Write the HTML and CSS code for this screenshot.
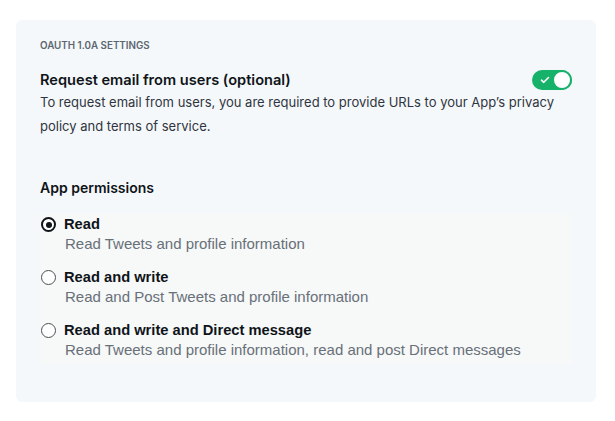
FILE: index.html
```html
<!DOCTYPE html>
<html>
<head>
<meta charset="utf-8">
<link rel="stylesheet" href="styles.css">
</head>
<body>
<div class="card">
  <div class="eyebrow">OAUTH 1.0A SETTINGS</div>
  <div class="setting">
    <div class="setting-head">
      <div class="setting-title">Request email from users (optional)</div>
      <div class="toggle">
        <svg class="toggle-check" width="10" height="8" viewBox="0 0 10 8"><path d="M1.5 4.2 L3.8 6.3 L8.5 1.5" fill="none" stroke="#fff" stroke-width="1.6" stroke-linecap="round" stroke-linejoin="round"/></svg>
        <span class="toggle-knob"></span>
      </div>
    </div>
    <p class="setting-desc">To request email from users, you are required to provide URLs to your App’s privacy policy and terms of service.</p>
  </div>
  <div class="section-title">App permissions</div>
  <div class="options">
    <div class="option">
      <span class="radio checked"></span>
      <div class="option-text">
        <div class="option-label">Read</div>
        <div class="option-desc">Read Tweets and profile information</div>
      </div>
    </div>
    <div class="option">
      <span class="radio"></span>
      <div class="option-text">
        <div class="option-label">Read and write</div>
        <div class="option-desc">Read and Post Tweets and profile information</div>
      </div>
    </div>
    <div class="option">
      <span class="radio"></span>
      <div class="option-text">
        <div class="option-label">Read and write and Direct message</div>
        <div class="option-desc">Read Tweets and profile information, read and post Direct messages</div>
      </div>
    </div>
  </div>
</div>
</body>
</html>
```
FILE: styles.css
```css
html, body { margin: 0; padding: 0; background: #fff; }
body { padding: 20px 19px 0 16px; font-family: Inter, "Noto Sans", sans-serif; color: #0f1419; }
.card {
  background: #f5f8fa;
  border-radius: 6px;
  padding: 19px 24px 0 24px;
  height: 382px;
  box-sizing: border-box;
}
.eyebrow { font-size: 9.8px; font-weight: 600; color: #5b6670; line-height: 12px; margin-top: 1px; }
.setting { margin-top: 18px; }
.setting-head { display: flex; justify-content: space-between; align-items: center; height: 20px; }
.setting-title { font-size: 14.6px; font-weight: 600; line-height: 20px; }
.toggle {
  width: 40px; height: 20px; border-radius: 10px; background: #17b26a;
  position: relative; display: flex; align-items: center; box-sizing: border-box; padding-left: 8px;
}
.toggle-knob {
  position: absolute; right: 0; top: 0; width: 20px; height: 20px; border-radius: 50%;
  background: #fff; border: 2px solid #17b26a; box-sizing: border-box;
}
.setting-desc { margin: 0; font-size: 13px; line-height: 24px; color: #2f3540; }
.section-title { margin-top: 40px; font-size: 14px; font-weight: 600; line-height: 20px; }
.options {
  margin-top: 16px;
  background: #f7f8f8;
  padding: 3px 0 0;
}
.option { display: flex; align-items: flex-start; gap: 9px; height: 53px; }
.option:last-child { height: 41px; }
.radio {
  width: 15px; height: 15px; border-radius: 50%; box-sizing: border-box; border: 1px solid #4a4f55;
  margin-top: 0; margin-left: 1px; flex: none; position: relative; background: #fff;
}
.radio.checked { border: 2px solid #0f1419; }
.radio.checked::after {
  content: ""; position: absolute; left: 2.5px; top: 2.5px; width: 6px; height: 6px; border-radius: 50%; background: #0f1419;
}
.option-text { display: flex; flex-direction: column; }
.option-label { font-family: "Liberation Sans", sans-serif; font-size: 14.7px; font-weight: 700; line-height: 16px; margin-top: -1px; margin-left: -1px; }
.option-desc { font-family: "Liberation Sans", sans-serif; font-size: 15px; color: #687078; line-height: 20px; margin-top: 2px; }
```
